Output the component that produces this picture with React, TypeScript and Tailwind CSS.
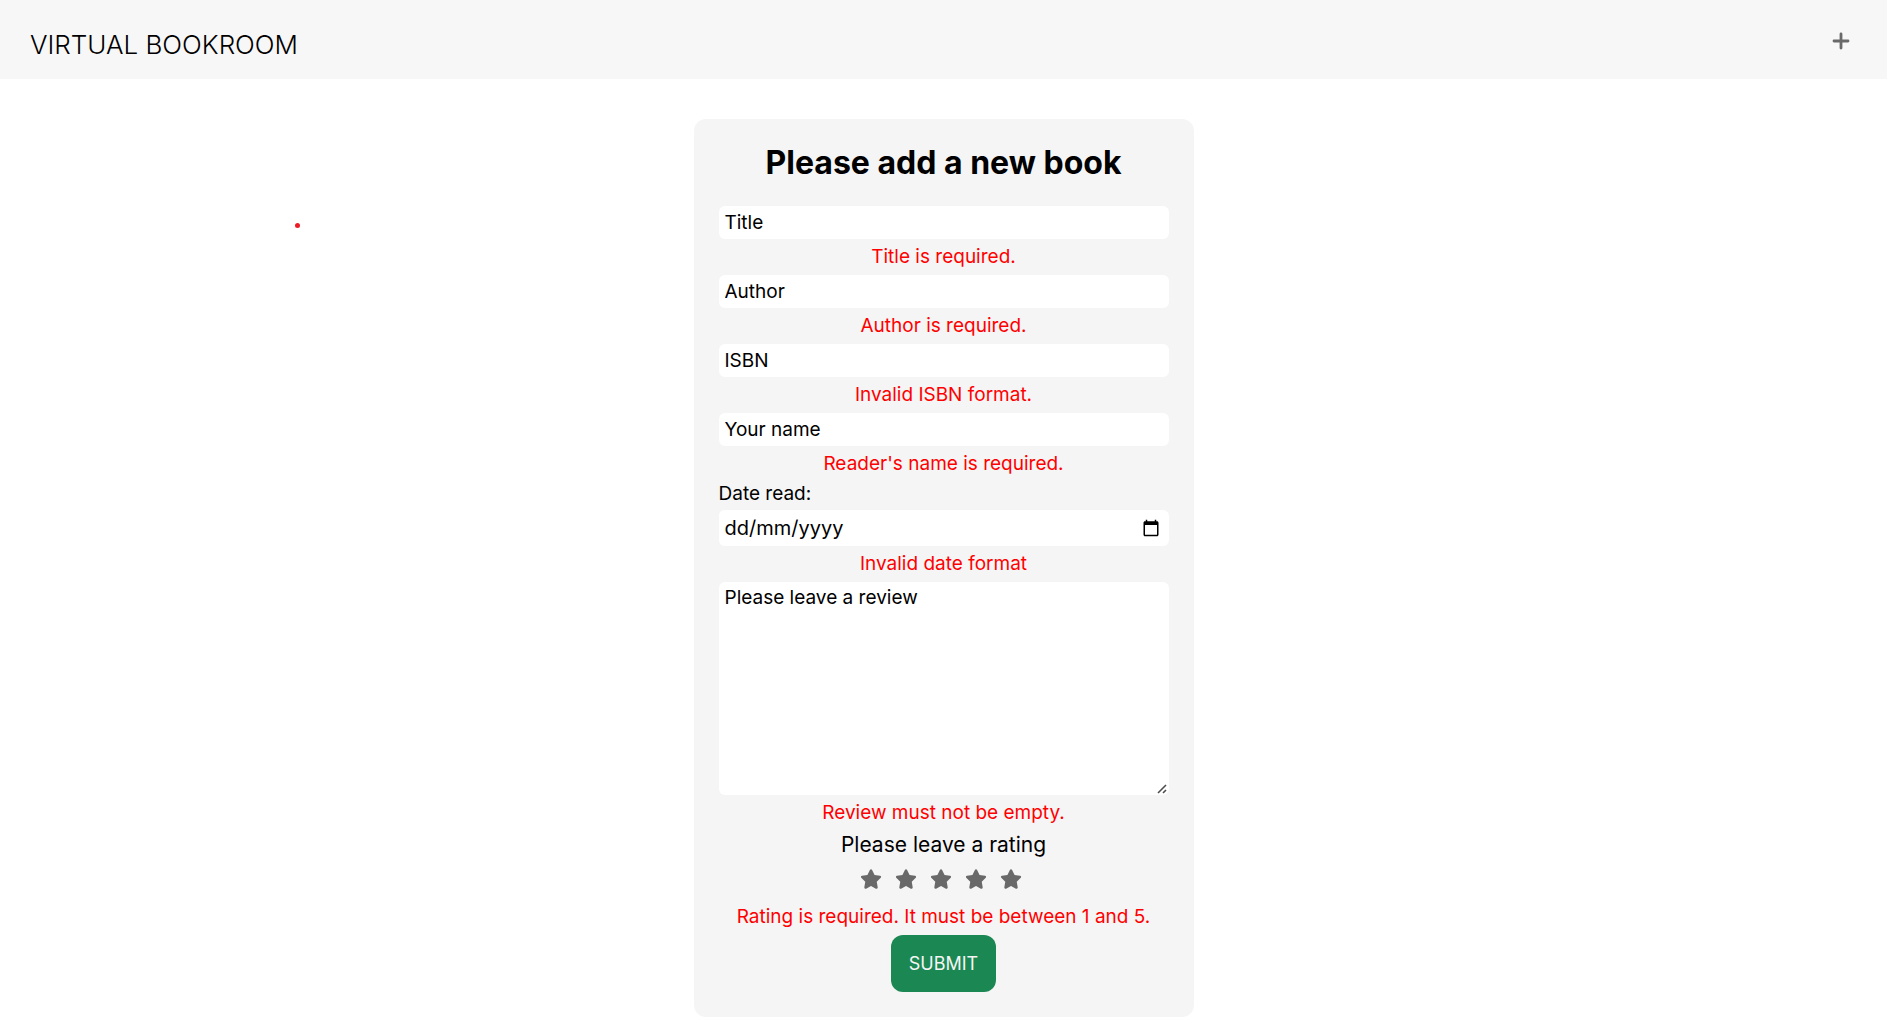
import { useState } from "react";
import { FaStar } from "react-icons/fa6";

const fieldClass =
  "block w-full rounded-[6px] bg-white px-[6px] text-black placeholder:text-black placeholder:opacity-100 outline-none";

function ErrorText({ id, children }: { id: string; children: string }) {
  return (
    <p id={id} className="flex h-9 items-center justify-center text-center text-[19px] leading-6 text-[#ff0000]">
      {children}
    </p>
  );
}

function TextField({ id, label, error }: { id: string; label: string; error: string }) {
  return (
    <div>
      <input
        id={id}
        type="text"
        aria-label={label}
        aria-describedby={`${id}-error`}
        placeholder={label}
        className={`${fieldClass} h-[33px] text-[19px]`}
      />
      <ErrorText id={`${id}-error`}>{error}</ErrorText>
    </div>
  );
}

function CalendarIcon() {
  return (
    <svg viewBox="0 0 24 24" className="size-[18px]" aria-hidden="true">
      <path
        fill="#000"
        d="M20 3h-1V1h-2v2H7V1H5v2H4c-1.100 0-2 .9-2 2v16c0 1.100.9 2 2 2h16c1.100 0 2-.9 2-2V5c0-1.100-.9-2-2-2zm0 18H4V8h16v13z"
      />
    </svg>
  );
}

export default function App() {
  const [rating, setRating] = useState(0);

  return (
    <div className="relative min-h-screen bg-white font-['Inter',sans-serif] text-black">
      <header className="flex h-[79px] items-center justify-between bg-[#f7f7f7] px-[30px] pt-[10px]">
        <a href="#" className="text-[26px] leading-8 font-light">
          VIRTUAL BOOKROOM
        </a>
        <button type="button" aria-label="Add book" className="mb-2 flex size-8 items-center justify-center">
          <svg viewBox="0 0 18 18" className="size-[18px]" aria-hidden="true">
            <path d="M9 2v14M2 9h14" stroke="#696969" strokeWidth="2.800" strokeLinecap="round" />
          </svg>
        </button>
      </header>

      <span className="absolute top-[223px] left-[295px] size-[5px] rounded-full bg-[#ed1c24]" />

      <main className="flex justify-center px-4 pt-10">
        <form
          noValidate
          onSubmit={(event) => event.preventDefault()}
          className="w-full max-w-[500px] rounded-xl bg-[#f5f5f5] p-[25px]"
        >
          <h1 className="mb-6 text-center text-[32px] leading-[38px] font-bold">Please add a new book</h1>

          <TextField id="title" label="Title" error="Title is required." />
          <TextField id="author" label="Author" error="Author is required." />
          <TextField id="isbn" label="ISBN" error="Invalid ISBN format." />
          <TextField id="reader" label="Your name" error="Reader's name is required." />

          <label htmlFor="date" className="mb-1 block text-[19px] leading-6">
            Date read:
          </label>
          <div className="flex h-9 items-center rounded-[6px] bg-white pr-[9px]">
            <input
              id="date"
              type="text"
              placeholder="dd/mm/yyyy"
              aria-describedby="date-error"
              className={`${fieldClass} h-9 text-[20px]`}
            />
            <button type="button" aria-label="Choose date">
              <CalendarIcon />
            </button>
          </div>
          <ErrorText id="date-error">Invalid date format</ErrorText>

          <div className="relative">
            <textarea
              aria-label="Review"
              aria-describedby="review-error"
              placeholder="Please leave a review"
              className={`${fieldClass} h-[213px] resize-y py-1 text-[19px] leading-6 [&::-webkit-resizer]:bg-transparent`}
            />
            <svg
              viewBox="0 0 10 10"
              className="pointer-events-none absolute right-[2px] bottom-px size-[10px]"
              aria-hidden="true"
            >
              <path d="M1 9L9 1M6 9L9 6" stroke="#4d4d4d" strokeWidth="1.600" />
            </svg>
          </div>
          <ErrorText id="review-error">Review must not be empty.</ErrorText>

          <fieldset>
            <legend className="mx-auto text-[21px] leading-7">Please leave a rating</legend>
            <div className="flex h-10 items-center justify-center gap-[13px] pr-[5px]">
              {[1, 2, 3, 4, 5].map((value) => (
                <button
                  key={value}
                  type="button"
                  aria-label={`${value} of 5`}
                  aria-pressed={rating === value}
                  onClick={() => setRating(value)}
                >
                  <FaStar className="size-[22px] text-[#696969]" />
                </button>
              ))}
            </div>
          </fieldset>
          <ErrorText id="rating-error">Rating is required. It must be between 1 and 5.</ErrorText>

          <button
            type="submit"
            className="mx-auto block h-[57px] rounded-xl bg-[#1b8854] px-[18px] text-[18px] leading-6 text-[#f5f5f5]"
          >
            SUBMIT
          </button>
        </form>
      </main>
    </div>
  );
}
